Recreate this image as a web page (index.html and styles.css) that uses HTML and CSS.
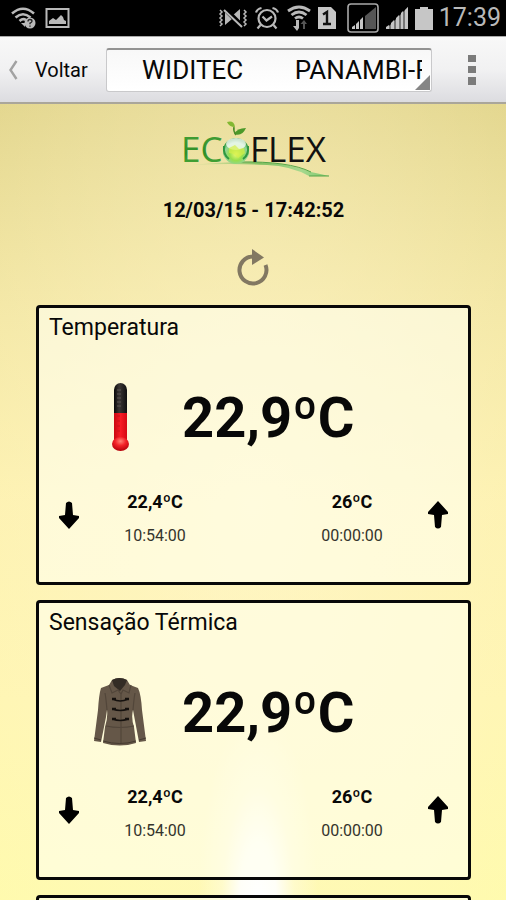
FILE: index.html
```html
<!DOCTYPE html>
<html lang="pt-BR">
<head>
<meta charset="utf-8">
<meta name="viewport" content="width=device-width, initial-scale=1">
<title>Ecoflex</title>
<link rel="stylesheet" href="styles.css">
</head>
<body>
<div class="app">
  <div class="status">
    <div class="status-group status-left">
      <svg width="26" height="24" viewBox="0 0 26 24" fill="none" stroke="#b9b9b9" stroke-width="2.6">
        <path d="M1 7.500Q12 -2 23 7.500M4.500 11.500Q12 5 19.500 11.500M8.500 15Q12 12 15 14"/>
        <path d="M10 17h4v4z" fill="#b9b9b9" stroke="none"/>
        <circle cx="19" cy="17" r="5.500" fill="#b9b9b9" stroke="none"/>
        <path d="M17 15.500q0-2 2-2t2 1.700q0 1-2 2v1M19 19.500v1.200" stroke="#222" stroke-width="1.300"/>
      </svg>
      <svg width="26" height="22" viewBox="0 0 26 22">
        <rect x="1.500" y="2" width="22" height="18" fill="none" stroke="#b9b9b9" stroke-width="2"/>
        <path d="M4 17v-3l4-3 3 2 5-5 2 2 1 3 2 1v3z" fill="#b9b9b9"/>
      </svg>
    </div>
    <div class="status-group">
      <svg width="30" height="22" viewBox="0 0 30 22" fill="none" stroke="#b9b9b9" stroke-width="1.500">
        <path d="M2 3l2 2-2 2 2 2-2 2 2 2-2 2 2 2-2 2M26 3l2 2-2 2 2 2-2 2 2 2-2 2 2 2-2 2"/>
        <path d="M7 5v13l7-6zM14 9l8-7v17z" fill="#b9b9b9" stroke="none"/>
        <path d="M7 2l17 17" stroke="#000" stroke-width="5"/>
        <path d="M6 3l18 17" stroke-width="2"/>
      </svg>
      <svg width="26" height="24" viewBox="0 0 26 24" fill="none" stroke="#b9b9b9" stroke-width="2.200">
        <circle cx="13" cy="12.500" r="8.500"/><path d="M8.500 10.500l4 4 5.500-4M2 6.500Q3 3 7.500 2M24 6.500Q23 3 18.500 2M6.500 19l-3 3.500M19.500 19l3 3.500"/>
      </svg>
      <svg width="26" height="26" viewBox="0 0 26 26" fill="none" stroke="#b9b9b9" stroke-width="2.800">
        <path d="M2 6Q13 -2 24 6M5.500 10Q13 4 20.500 10M9 13.500Q13 10.500 17 13.500"/>
        <path d="M10 15v6H7l4 5 2-3v-8z" fill="#b9b9b9" stroke="none"/><path d="M17 24v-5h-2.500l3.500-4 3 4h-2v5z" fill="#555" stroke="none"/>
      </svg>
      <svg width="18" height="22" viewBox="0 0 18 22">
        <path d="M0 0h13l5 5v17H0z" fill="#c6c6c6"/><path d="M5 7.500l4-2.500v12M5 17h8" fill="none" stroke="#111" stroke-width="2.400"/>
      </svg>
      <svg class="signal-box" width="32" height="31" viewBox="0 0 32 31">
        <rect x="1" y="1" width="30" height="28" rx="3" fill="none" stroke="#a9a9a9" stroke-width="1.600"/>
        <path d="M5 26v-2l3-2v4zM9 26v-5l3-3v8zM13 26v-9l3-3v12z" fill="#c6c6c6"/><path d="M18 26V13L29 4v22z" fill="#555"/>
      </svg>
      <svg width="24" height="24" viewBox="0 0 24 24">
        <path d="M1 23L23 1v22z" fill="#777"/><path d="M1 23v-2l3-2v4zM6 23v-6l3-3v9zM11 23V12l3-3v14zM16 23V7l2-2v18zM20 23V4l3-3v22z" fill="#c6c6c6"/>
      </svg>
      <svg width="18" height="23" viewBox="0 0 18 23"><path d="M5 0h8v2h5v21H0V2h5z" fill="#c6c6c6"/></svg>
      <span class="clock">17:39</span>
    </div>
  </div>

  <header class="bar">
    <button class="back" type="button">
      <svg width="10" height="20" viewBox="0 0 10 20" fill="none" stroke="#a2a2a2" stroke-width="2.400"><path d="M8.500 1L2.500 10l6 9"/></svg>
      <span>Voltar</span>
    </button>
    <div class="picker">
      <select aria-label="Estação">
        <option>WIDITEC&nbsp;&nbsp;&nbsp;&nbsp;&nbsp;&nbsp;&nbsp;&nbsp;PANAMBI-RS</option>
      </select>
    </div>
    <button class="more" type="button" aria-label="Mais opções">
      <svg width="8" height="30" viewBox="0 0 8 30" fill="#7b7b7b"><path d="M0 0h8v7H0zM0 11h8v7H0zM0 22h8v8H0z"/></svg>
    </button>
  </header>

  <main class="content">
    <svg class="logo" width="150" height="62" viewBox="0 0 150 62" role="img" aria-label="Ecoflex">
      <defs>
        <linearGradient id="ec" x1="0" y1="0" x2="0" y2="1"><stop offset="0" stop-color="#4da63d"/><stop offset=".6" stop-color="#2f8f27"/><stop offset="1" stop-color="#57b545"/></linearGradient>
        <radialGradient id="orb" cx=".5" cy=".62" r=".55"><stop offset="0" stop-color="#eefb70"/><stop offset=".45" stop-color="#97df4c"/><stop offset=".8" stop-color="#8fd49a"/><stop offset="1" stop-color="#3ea046"/></radialGradient>
        <linearGradient id="swoosh"><stop offset="0" stop-color="#b9d58a" stop-opacity=".2"/><stop offset=".5" stop-color="#7fbf60"/><stop offset=".8" stop-color="#a6d98e"/><stop offset="1" stop-color="#7cc46a"/></linearGradient>
      </defs>
      <path d="M12 47Q60 42 92 45Q114 47 132 54L150 58H130Q112 48 88 47Q50 45 12 47z" fill="url(#swoosh)"/>
      <path d="M60 44Q110 43 132 54M130 58h20" fill="none" stroke="#55a548" stroke-width="1"/>
      <text x="2" y="44" fill="url(#ec)">EC</text>
      <circle cx="57" cy="33" r="13" fill="url(#orb)"/>
      <ellipse cx="57" cy="26" rx="10" ry="6" fill="#fff" opacity=".75"/>
      <path d="M50 30l6-3 4 4 5-1 1 5-7 5-4-4-5-1z" fill="#d6f04a" opacity=".7"/>
      <path d="M45 28q-1 9 5 13M69 28q1 9-5 13" fill="none" stroke="#2f9740" stroke-width="2"/>
      <path d="M48 4q7-2 8 5-6 0-8-5z" fill="#83b832"/><path d="M55 16q3-6 12-6-4 9-12 6z" fill="#4c9929"/><path d="M55 9q-1 4 2 8" fill="none" stroke="#4c8b29" stroke-width="1.500"/>
      <text x="71" y="44" fill="#111">FLEX</text>
    </svg>
    <time class="stamp">12/03/15 - 17:42:52</time>
    <button class="refresh" type="button" aria-label="Atualizar">
      <svg width="34" height="38" viewBox="0 0 34 38"><path d="M16 8.500A13.500 13.500 0 1 0 28.500 17" fill="none" stroke="#827862" stroke-width="4"/><path d="M15 1l12 8.500L15 17z" fill="#827862"/></svg>
    </button>

    <section class="card">
      <h2>Temperatura</h2>
      <div class="current">
        <svg width="60" height="72" viewBox="0 0 60 72">
          <defs>
            <linearGradient id="tube"><stop offset="0" stop-color="#080808"/><stop offset=".4" stop-color="#3b3735"/><stop offset="1" stop-color="#101010"/></linearGradient>
            <linearGradient id="mercury"><stop offset="0" stop-color="#c90710"/><stop offset=".5" stop-color="#f71c24"/><stop offset="1" stop-color="#d50a13"/></linearGradient>
            <radialGradient id="bulb" cx=".5" cy=".3" r=".7"><stop offset="0" stop-color="#ff8376"/><stop offset=".45" stop-color="#f32328"/><stop offset="1" stop-color="#b40009"/></radialGradient>
          </defs>
          <path d="M24 31V8a6.500 7 0 0 1 13 0v23z" fill="url(#tube)"/><path d="M24 31h13v28H24z" fill="url(#mercury)"/><ellipse cx="30.500" cy="62" rx="8.500" ry="7" fill="url(#bulb)"/>
          <path d="M27 8h4M27 12h4M27 16h4M27 20h4M27 24h4" stroke="#5c5754" stroke-width="1"/><path d="M27 34h3M27 39h3M27 44h3M27 49h3" stroke="#c8101a" stroke-width="1"/>
        </svg>
        <strong>22,9ºC</strong>
      </div>
      <div class="limits">
        <div class="limit">
          <svg width="20" height="28" viewBox="0 0 20 28"><path d="M7 2Q10-1 13 2L14 14l6 1v2L10 28 0 17v-2l6-1z"/></svg>
          <div class="reading"><b>22,4ºC</b><span>10:54:00</span></div>
        </div>
        <div class="limit">
          <div class="reading"><b>26ºC</b><span>00:00:00</span></div>
          <svg width="20" height="28" viewBox="0 0 20 28"><path d="M7 26Q10 29 13 26L14 14l6-1v-2L10 0 0 11v2l6 1z"/></svg>
        </div>
      </div>
    </section>

    <section class="card">
      <h2>Sensação Térmica</h2>
      <div class="current">
        <svg width="60" height="72" viewBox="0 0 60 72">
          <path d="M22 3l-3 5-8 3Q9 17 8 33L4 64l7 1 5-25 1-7q1 8-2 17l-2 16q17 5 33 0l-2-16q-3-9-1-17l6 32 7-1-4-31q-1-16-4-22l-8-3-3-5q-7-4-15 0z" fill="#655748"/>
          <path d="M22 3q7-4 15 0l-2 5-5 6-6-5z" fill="#332c25"/>
          <path d="M19 8l3 8 6-3 3 4 2-4 6 3 2-8M31 17v49M17 33q-1-12-2-17M43 33q1-12 2-17M16 49q14 3 28 0" fill="none" stroke="#52463a" stroke-width="1.200"/>
          <path d="M23 22q7 4 15 0M23 32q7 3 15 0M23 42q7 3 15 0" fill="none" stroke="#15110e" stroke-width="1.500"/>
          <path d="M22 22h4M35 22h4M22 32h4M35 32h4M22 42h4M35 42h4" stroke="#15110e" stroke-width="2.500"/>
          <path d="M4 61l7 2M49 63l7-2M13 64q17 5 33 0" fill="none" stroke="#453a30" stroke-width="1"/>
        </svg>
        <strong>22,9ºC</strong>
      </div>
      <div class="limits">
        <div class="limit">
          <svg width="20" height="28" viewBox="0 0 20 28"><path d="M7 2Q10-1 13 2L14 14l6 1v2L10 28 0 17v-2l6-1z"/></svg>
          <div class="reading"><b>22,4ºC</b><span>10:54:00</span></div>
        </div>
        <div class="limit">
          <div class="reading"><b>26ºC</b><span>00:00:00</span></div>
          <svg width="20" height="28" viewBox="0 0 20 28"><path d="M7 26Q10 29 13 26L14 14l6-1v-2L10 0 0 11v2l6 1z"/></svg>
        </div>
      </div>
    </section>

    <section class="card"></section>
  </main>
</div>
</body>
</html>
```
FILE: styles.css
```css
* { box-sizing: border-box; }

body {
  margin: 0;
  font-family: Roboto, "Liberation Sans", sans-serif;
  color: #080808;
}

svg { display: block; flex: none; }

button {
  border: 0;
  padding: 0;
  background: none;
  color: inherit;
  font: inherit;
}

.app {
  display: flex;
  flex-direction: column;
  height: 100vh;
}

.status {
  display: flex;
  flex: none;
  justify-content: space-between;
  height: 36px;
  padding: 0 5px 0 11px;
  background: #000;
}

.status-group {
  display: flex;
  align-items: center;
  gap: 6px;
}

.status-left { gap: 8px; }
.signal-box { margin-left: 5px; }

.clock {
  color: #b9b9b9;
  font-size: 25px;
  line-height: 36px;
}

.bar {
  display: flex;
  flex: none;
  align-items: center;
  height: 68px;
  border-top: 1px solid #a9a9a9;
  border-bottom: 2px solid #aaa69a;
  background: linear-gradient(#f8f8f8, #f1f1f2 50%, #dcdce0);
}

.back {
  display: flex;
  align-items: center;
  gap: 17px;
  width: 106px;
  padding-left: 8px;
  font-size: 20px;
}

.picker {
  position: relative;
  flex: 1;
  min-width: 0;
}

.picker::after {
  content: "";
  position: absolute;
  right: 2px;
  bottom: 2px;
  border-left: 15px solid transparent;
  border-bottom: 15px solid #858585;
}

.picker select {
  display: block;
  width: 100%;
  height: 44px;
  padding: 0 9px 0 35px;
  border: 1px solid #c9c9cb;
  border-top: 2px solid #929292;
  border-radius: 3px;
  appearance: none;
  background: linear-gradient(#f8f8f8, #fff);
  color: #080808;
  font: 26px Roboto, "Liberation Sans", sans-serif;
}

.more {
  display: flex;
  justify-content: flex-end;
  width: 74px;
  padding-right: 30px;
}

.content {
  display: flex;
  flex: 1;
  flex-direction: column;
  align-items: center;
  min-height: 0;
  padding: 14px 35px 0 36px;
  overflow-y: auto;
  scrollbar-width: none;
  background:
    radial-gradient(ellipse 60px 190px at 51% 100%, #fff 0, rgba(255, 255, 255, .9) 30%, rgba(255, 255, 255, .3) 60%, transparent 100%),
    radial-gradient(ellipse 80% 90% at 50% 50%, rgba(255, 246, 204, .7), transparent),
    linear-gradient(#e0d388, #f1e49d 25%, #fdf1ab 50%, #fff6ae 75%, #fffbaa);
}

.logo {
  width: 150px;
  height: 62px;
}

.logo text {
  font-family: "Open Sans", sans-serif;
  font-size: 35px;
}

.stamp {
  margin-top: 18px;
  font-size: 20px;
  font-weight: 700;
  line-height: 24px;
}

.refresh { margin: 26px 0 19px; }

.card {
  display: flex;
  flex: none;
  flex-direction: column;
  width: 100%;
  min-height: 280px;
  margin-bottom: 15px;
  padding: 6px 20px 0;
  border: 3px solid #080808;
  border-radius: 4px;
  background: rgba(255, 255, 238, .6);
}

.card h2 {
  margin: 0 -10px;
  font-size: 23px;
  font-weight: 400;
  line-height: 28px;
}

.current {
  display: flex;
  align-items: center;
  gap: 32px;
  margin-top: 36px;
  padding-left: 31px;
}

.current strong {
  font-size: 56px;
  line-height: 80px;
}

.limits {
  display: flex;
  justify-content: space-between;
  margin-top: 32px;
}

.limit {
  display: flex;
  align-items: flex-start;
  gap: 31px;
}

.limit svg { margin-top: 11px; }

.reading {
  display: flex;
  flex-direction: column;
  gap: 10px;
  width: 90px;
  text-align: center;
}

.reading b {
  font-size: 18px;
  line-height: 24px;
}

.reading span {
  color: #34342c;
  font-size: 16px;
  line-height: 24px;
}
```
